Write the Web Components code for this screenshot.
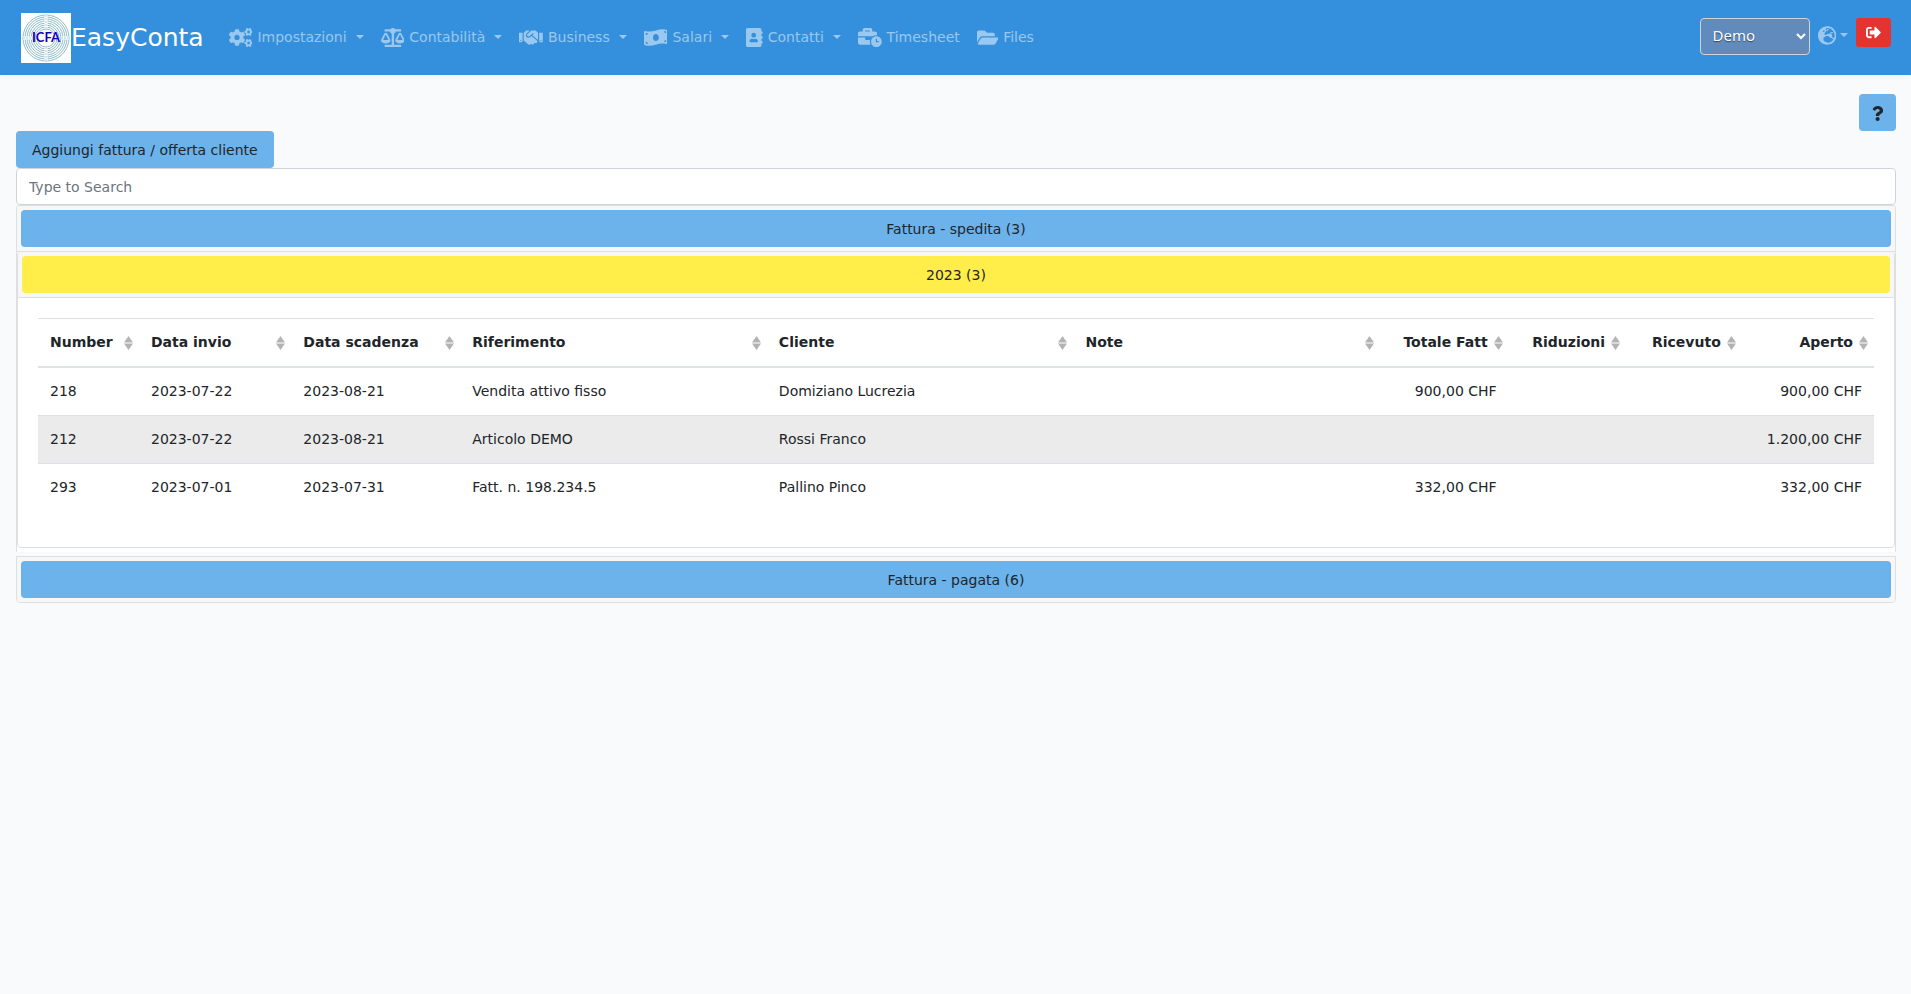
<!DOCTYPE html>
<html lang="it">
<head>
<meta charset="utf-8">
<meta name="viewport" content="width=device-width, initial-scale=1">
<title>EasyConta</title>
<style>
  html { font-family: "DejaVu Sans", sans-serif; font-size: 14px; line-height: 23px; color: #212529; background: #f8fafc; }
  body { margin: 0; }
</style>
</head>
<body>
<easy-app></easy-app>
<script>
const define = (name, html, setup) => customElements.define(name, class extends HTMLElement {
  connectedCallback() {
    if (this.shadowRoot) return;
    const root = this.attachShadow({ mode: "open" });
    const t = document.createElement("template");
    t.innerHTML = html;
    root.append(t.content.cloneNode(true));
    if (setup) setup(this, root);
  }
});

const ICONS = {
  cogs: [640, "M512.1 191l-8.2 14.3c-3 5.3-9.4 7.5-15.1 5.4-11.8-4.4-22.6-10.7-32.1-18.6-4.6-3.8-5.8-10.5-2.8-15.7l8.2-14.3c-6.9-8-12.3-17.3-15.9-27.4h-16.5c-6 0-11.2-4.3-12.2-10.3-2-12-2.1-24.6 0-37.1 1-6 6.2-10.4 12.2-10.4h16.5c3.6-10.1 9-19.4 15.9-27.4l-8.2-14.3c-3-5.2-1.9-11.9 2.8-15.7 9.5-7.9 20.4-14.2 32.1-18.6 5.7-2.1 12.1.1 15.1 5.4l8.2 14.3c10.5-1.9 21.2-1.9 31.7 0L552 6.3c3-5.3 9.4-7.5 15.1-5.4 11.8 4.4 22.6 10.7 32.1 18.6 4.6 3.8 5.8 10.5 2.8 15.7l-8.2 14.3c6.9 8 12.3 17.3 15.9 27.4h16.5c6 0 11.2 4.3 12.2 10.3 2 12 2.1 24.6 0 37.1-1 6-6.2 10.4-12.2 10.4h-16.5c-3.6 10.1-9 19.4-15.9 27.4l8.2 14.3c3 5.2 1.9 11.9-2.8 15.7-9.5 7.9-20.4 14.2-32.1 18.6-5.7 2.1-12.1-.1-15.1-5.4l-8.2-14.3c-10.4 1.9-21.2 1.9-31.7 0zm-10.5-58.8c38.5 29.6 82.4-14.3 52.8-52.8-38.5-29.7-82.4 14.3-52.8 52.8zM386.3 286.1l33.7 16.8c10.1 5.8 14.5 18.1 10.5 29.1-8.9 24.2-26.4 46.4-42.6 65.8-7.4 8.9-20.2 11.1-30.3 5.3l-29.1-16.8c-16 13.7-34.6 24.6-54.9 31.7v33.6c0 11.6-8.3 21.6-19.7 23.6-24.6 4.2-50.4 4.4-75.9 0-11.5-2-20-11.9-20-23.6V418c-20.3-7.2-38.9-18-54.9-31.7L74 403c-10 5.8-22.9 3.6-30.3-5.3-16.2-19.4-33.3-41.6-42.2-65.7-4-10.9.4-23.2 10.5-29.1l33.3-16.8c-3.9-20.9-3.9-42.4 0-63.4L12 205.8c-10.1-5.8-14.6-18.1-10.5-29 8.9-24.2 26-46.4 42.2-65.8 7.4-8.9 20.2-11.1 30.3-5.3l29.1 16.8c16-13.7 34.6-24.6 54.9-31.7V57.1c0-11.5 8.2-21.5 19.6-23.5 24.6-4.2 50.5-4.4 76-.1 11.5 2 20 11.9 20 23.6v33.6c20.3 7.2 38.9 18 54.9 31.7l29.1-16.8c10-5.8 22.9-3.6 30.3 5.3 16.2 19.4 33.2 41.6 42.1 65.8 4 10.9.1 23.2-10 29.1l-33.7 16.8c3.9 21 3.9 42.5 0 63.5zm-117.6 21.1c59.2-77-28.7-164.9-105.7-105.7-59.2 77 28.7 164.9 105.7 105.7zm243.4 182.7l-8.2 14.3c-3 5.3-9.4 7.5-15.1 5.4-11.8-4.4-22.6-10.7-32.1-18.6-4.6-3.8-5.8-10.5-2.8-15.7l8.2-14.3c-6.9-8-12.3-17.3-15.9-27.4h-16.5c-6 0-11.2-4.3-12.2-10.3-2-12-2.1-24.6 0-37.1 1-6 6.2-10.4 12.2-10.4h16.5c3.6-10.1 9-19.4 15.9-27.4l-8.2-14.3c-3-5.2-1.9-11.9 2.8-15.7 9.5-7.9 20.4-14.2 32.1-18.6 5.7-2.1 12.1.1 15.1 5.4l8.2 14.3c10.5-1.9 21.2-1.9 31.7 0l8.2-14.3c3-5.3 9.4-7.5 15.1-5.4 11.8 4.4 22.6 10.7 32.1 18.6 4.6 3.8 5.8 10.5 2.8 15.7l-8.2 14.3c6.9 8 12.3 17.3 15.9 27.4h16.5c6 0 11.2 4.3 12.2 10.3 2 12 2.1 24.6 0 37.1-1 6-6.2 10.4-12.2 10.4h-16.5c-3.6 10.1-9 19.4-15.9 27.4l8.2 14.3c3 5.2 1.9 11.9-2.8 15.7-9.5 7.9-20.4 14.2-32.1 18.6-5.7 2.1-12.1-.1-15.1-5.4l-8.2-14.3c-10.4 1.9-21.2 1.9-31.7 0zM501.6 431c38.5 29.6 82.4-14.3 52.8-52.8-38.5-29.6-82.4 14.3-52.8 52.8z"],
  scale: [640, "M256 336h-.02c0-16.18 1.34-8.73-85.05-181.51-17.65-35.29-68.19-35.36-85.87 0C-2.06 328.75.02 320.33.02 336H0c0 44.18 57.31 80 128 80s128-35.82 128-80zM128 176l72 144H56l72-144zm511.98 160c0-16.18 1.34-8.73-85.05-181.51-17.65-35.29-68.19-35.36-85.87 0-87.12 174.26-85.04 165.84-85.04 181.51H384c0 44.18 57.31 80 128 80s128-35.82 128-80h-.02zM440 320l72-144 72 144H440zm88 128H352V153.25c23.51-10.29 41.16-31.48 46.39-57.25H528c8.84 0 16-7.16 16-16V48c0-8.84-7.16-16-16-16H383.64C369.04 12.68 346.09 0 320 0s-49.04 12.68-63.64 32H112c-8.84 0-16 7.16-16 16v32c0 8.84 7.16 16 16 16h129.61c5.23 25.76 22.87 46.96 46.39 57.25V448H112c-8.84 0-16 7.16-16 16v32c0 8.84 7.16 16 16 16h416c8.84 0 16-7.16 16-16v-32c0-8.84-7.16-16-16-16z"],
  handshake: [640, "M434.7 64h-85.9c-8 0-15.7 3-21.6 8.4l-98.3 90c-.1.1-.2.3-.3.4-16.6 15.6-16.3 40.5-2.1 56 12.7 13.9 39.4 17.6 56.1 2.7.1-.1.3-.1.4-.2l79.9-73.2c6.5-5.9 16.7-5.5 22.6 1 6 6.5 5.5 16.6-1 22.6l-26.1 23.9L504 313.8c2.9 2.4 5.5 5 7.9 7.7V128l-54.6-54.6c-5.9-6-14.1-9.4-22.6-9.4zM544 128.2v223.9c0 17.7 14.3 32 32 32h64V128.2h-96zm48 223.9c-8.8 0-16-7.2-16-16s7.2-16 16-16 16 7.2 16 16-7.2 16-16 16zM0 384h64c17.7 0 32-14.3 32-32V128.2H0V384zm48-63.9c8.8 0 16 7.2 16 16s-7.2 16-16 16-16-7.2-16-16c0-8.9 7.2-16 16-16zm435.9 18.6L334.6 217.5l-30 27.5c-29.7 27.1-75.2 24.5-101.7-4.4-26.9-29.4-24.8-74.9 4.4-101.7L289.1 64h-83.8c-8.5 0-16.6 3.4-22.6 9.4L128 128v223.9h18.3l90.5 81.9c27.4 22.3 67.7 18.1 90-9.3l.2-.2 17.9 15.5c15.9 13 39.4 10.5 52.3-5.4l31.4-38.6 5.4 4.4c13.7 11.1 33.9 9.1 45-4.7l9.5-11.7c11.2-13.8 9.1-33.9-4.6-45.1z"],
  money: [640, "M621.16 54.46C582.37 38.19 543.55 32 504.75 32c-123.17-.01-246.33 62.34-369.5 62.34-30.89 0-61.76-3.92-92.65-13.72-3.47-1.1-6.95-1.62-10.35-1.62C15.04 79 0 92.32 0 110.81v317.26c0 12.63 7.23 24.6 18.84 29.46C57.63 473.81 96.45 480 135.25 480c123.17 0 246.34-62.35 369.51-62.35 30.89 0 61.76 3.92 92.65 13.72 3.47 1.1 6.95 1.62 10.35 1.62 17.21 0 32.25-13.32 32.25-31.81V83.93c-.01-12.64-7.24-24.6-18.85-29.47zM48 132.22c20.12 5.04 41.12 7.57 62.72 8.93C104.84 170.54 79 192.69 48 192.69v-60.47zm0 285v-47.78c34.37 0 62.18 27.27 63.71 61.4-22.53-1.81-43.59-6.31-63.71-13.62zM320 352c-44.19 0-80-42.99-80-96 0-53.02 35.82-96 80-96s80 42.98 80 96c0 53.03-35.83 96-80 96zm272 27.78c-17.52-4.39-35.71-6.85-54.32-8.44 5.87-26.08 27.5-45.88 54.32-49.28v57.72zm0-236.11c-30.89-3.91-54.86-29.7-55.81-61.55 19.54 2.17 38.09 6.23 55.81 12.66v48.89z"],
  contacts: [448, "M436 160c6.6 0 12-5.4 12-12v-40c0-6.6-5.4-12-12-12h-20V48c0-26.5-21.5-48-48-48H48C21.5 0 0 21.5 0 48v416c0 26.5 21.5 48 48 48h320c26.5 0 48-21.5 48-48v-48h20c6.6 0 12-5.4 12-12v-40c0-6.6-5.4-12-12-12h-20v-64h20c6.6 0 12-5.4 12-12v-40c0-6.6-5.4-12-12-12h-20v-64h20zm-228-32c35.3 0 64 28.7 64 64s-28.7 64-64 64-64-28.7-64-64 28.7-64 64-64zm112 236.8c0 10.6-10 19.2-22.4 19.2H118.4C106 384 96 375.4 96 364.8v-19.2c0-31.8 30.1-57.6 67.2-57.6h5c12.3 5.1 25.7 8 39.8 8s27.6-2.9 39.8-8h5c37.1 0 67.2 25.8 67.2 57.6v19.2z"],
  timesheet: [640, "M496 224c-79.59 0-144 64.41-144 144s64.41 144 144 144 144-64.41 144-144-64.41-144-144-144zm64 150.29c0 5.34-4.37 9.71-9.71 9.71h-60.57c-5.34 0-9.71-4.37-9.71-9.71v-76.57c0-5.34 4.37-9.71 9.71-9.71h12.57c5.34 0 9.71 4.37 9.71 9.71V352h38.29c5.34 0 9.71 4.37 9.71 9.71v12.58zM496 192c5.4 0 10.72.33 16 .81V144c0-25.6-22.4-48-48-48h-80V48c0-25.6-22.4-48-48-48H176c-25.6 0-48 22.4-48 48v48H48c-25.6 0-48 22.4-48 48v80h395.12c28.6-20.09 63.35-32 100.88-32zM320 96H192V64h128v32zm6.82 224H208c-8.84 0-16-7.16-16-16v-48H0v144c0 25.6 22.4 48 48 48h291.43C327.1 423.96 320 396.82 320 368c0-16.66 2.48-32.72 6.82-48z"],
  folder: [576, "M572.694 292.093L500.27 416.248A63.997 63.997 0 0 1 444.989 448H45.025c-18.523 0-30.064-20.093-20.731-36.093l72.424-124.155A64 64 0 0 1 152 256h399.964c18.523 0 30.064 20.093 20.73 36.093zM152 224h328v-48c0-26.51-21.49-48-48-48H272l-64-64H48C21.49 64 0 85.49 0 112v278.046l69.077-118.418C86.214 242.25 117.989 224 152 224z"],
  logout: [512, "M497 273L329 441c-15 15-41 4.5-41-17v-96H152c-13.3 0-24-10.7-24-24v-96c0-13.3 10.7-24 24-24h136V88c0-21.4 25.9-32 41-17l168 168c9.3 9.4 9.3 24.6 0 34zM192 436v-40c0-6.6-5.4-12-12-12H96c-17.7 0-32-14.3-32-32V160c0-17.7 14.3-32 32-32h84c6.6 0 12-5.4 12-12V76c0-6.6-5.4-12-12-12H96c-53 0-96 43-96 96v192c0 53 43 96 96 96h84c6.6 0 12-5.4 12-12z"],
  question: [384, "M202.021 0C122.202 0 70.503 32.703 29.914 91.026c-7.363 10.58-5.093 25.086 5.178 32.874l43.138 32.709c10.373 7.865 25.132 6.026 33.253-4.148 25.049-31.381 43.63-49.449 82.757-49.449 30.764 0 68.816 19.799 68.816 49.631 0 22.552-18.617 34.134-48.993 51.164-35.423 19.86-82.299 44.576-82.299 106.405V320c0 13.255 10.745 24 24 24h72.471c13.255 0 24-10.745 24-24v-5.773c0-42.86 125.268-44.645 125.268-160.627C377.504 66.256 286.902 0 202.021 0zM192 373.459c-38.196 0-69.271 31.075-69.271 69.271 0 38.195 31.075 69.27 69.271 69.27s69.271-31.075 69.271-69.271-31.075-69.27-69.271-69.27z"],
  globe: [496, "M248 8C111 8 0 119 0 256s111 248 248 248 248-111 248-248S385 8 248 8zm200 248c0 22.5-3.9 44.2-10.8 64.4h-20.3c-4.3 0-8.4-1.7-11.4-4.8l-32-32.6c-4.5-4.6-4.5-12.1.1-16.7l12.5-12.5v-8.7c0-3-1.2-5.9-3.3-8l-9.4-9.4c-2.1-2.1-5-3.3-8-3.3h-16c-6.2 0-11.3-5.1-11.3-11.3 0-3 1.2-5.9 3.3-8l9.4-9.4c2.1-2.1 5-3.3 8-3.3h32c6.2 0 11.3-5.1 11.3-11.3v-9.4c0-6.2-5.1-11.3-11.3-11.3h-36.7c-8.8 0-16 7.2-16 16v4.5c0 6.9-4.4 13-10.9 15.2l-31.6 10.5c-3.3 1.1-5.5 4.1-5.5 7.6v2.3c0 4.4-3.6 8-8 8h-16c-4.4 0-8-3.6-8-8s-3.6-8-8-8H247c-3 0-5.8 1.7-7.2 4.4l-9.4 18.7c-2.7 5.4-8.2 8.8-14.3 8.8H194c-8.8 0-16-7.2-16-16V199c0-4.2 1.7-8.3 4.7-11.3l20.1-20.1c4.6-4.6 7.2-10.9 7.2-17.5 0-3.4 2.2-6.5 5.5-7.6l40-13.3c1.7-.6 3.2-1.5 4.4-2.7l26.8-26.8c2.1-2.1 3.3-5 3.3-8 0-6.2-5.1-11.3-11.3-11.3H258l-16 16v8c0 4.4-3.6 8-8 8h-16c-4.4 0-8-3.6-8-8v-20c0-2.5 1.2-4.9 3.2-6.4l28.9-21.7c1.9-.1 3.8-.3 5.7-.3C358.3 56 448 145.7 448 256zM130.1 149.1c0-3 1.2-5.9 3.3-8l25.4-25.4c2.1-2.1 5-3.3 8-3.3 6.2 0 11.3 5.1 11.3 11.3v16c0 3-1.2 5.9-3.3 8l-9.4 9.4c-2.1 2.1-5 3.3-8 3.3h-16c-6.2 0-11.3-5.1-11.3-11.3zm128 306.4v-7.1c0-8.8-7.2-16-16-16h-20.2c-10.8 0-26.7-5.3-35.4-11.8l-22.2-16.7c-11.5-8.6-18.2-22.1-18.2-36.4v-23.9c0-16 8.4-30.8 22.1-39l42.9-25.7c7.1-4.2 15.2-6.5 23.4-6.5h31.2c10.9 0 21.4 3.9 29.6 10.9l43.2 37.1h18.3c8.5 0 16.6 3.4 22.6 9.4l17.3 17.3c3.4 3.4 8.1 5.3 12.9 5.3H423c-32.4 58.9-93.8 99.5-164.9 103.1z"]
};

define("easy-icon", `
  <style>
    :host { display: inline-flex; flex: none; }
    svg { display: block; height: var(--icon-size, 19px); fill: currentColor; }
  </style>
  <svg aria-hidden="true"><path fill-rule="evenodd"></path></svg>`,
  (el, root) => {
    const [w, d] = ICONS[el.getAttribute("name")];
    root.querySelector("svg").setAttribute("viewBox", `0 0 ${w} 512`);
    root.querySelector("path").setAttribute("d", d);
  });

define("nav-link", `
  <style>
    :host { display: block; }
    a { display: flex; align-items: center; gap: 5px; padding: 8px; color: rgba(255,255,255,.5); text-decoration: none; white-space: nowrap; }
    :host([menu]) a::after { content: ""; margin: 0 0 2px 4px; border: 4px solid transparent; border-top-color: currentColor; border-bottom: 0; }
    :host([compact]) a { gap: 0; padding: 8px 0; }
  </style>
  <a href="#"><slot></slot></a>`,
  (el, root) => {
    const link = root.querySelector("a");
    const icon = document.createElement("easy-icon");
    icon.setAttribute("name", el.getAttribute("icon"));
    link.prepend(icon);
    const label = el.getAttribute("label");
    if (label) link.setAttribute("aria-label", label);
  });

define("easy-logo", `
  <style>
    :host { display: block; width: 50px; height: 50px; background: #fff; }
    svg { display: block; }
    text { font: bold 13px Lato, sans-serif; fill: #1800b4; }
  </style>
  <svg width="50" height="50" viewBox="0 0 50 50" role="img" aria-label="ICFA">
    <g class="rings" fill="none" stroke="#8fbcc4"></g>
    <path d="M25 2v13M25 34v14M2 25h9M40 25h8" stroke="#fff" stroke-width="3"/>
    <path d="M25 2v13M25 34v14M2 25h9M40 25h8" stroke="#a9ccd2" stroke-dasharray="2 1"/>
    <text x="25" y="29" text-anchor="middle">ICFA</text>
  </svg>`,
  (el, root) => {
    const g = root.querySelector(".rings");
    for (let r = 9; r <= 23; r += 2) {
      const c = document.createElementNS("http://www.w3.org/2000/svg", "circle");
      c.setAttribute("cx", 25); c.setAttribute("cy", 25); c.setAttribute("r", r);
      g.append(c);
    }
  });

define("easy-navbar", `
  <style>
    :host { display: flex; align-items: center; min-height: 75px; box-sizing: border-box; padding: 0 20px 0 21px; background: #3490dc; box-shadow: 0 2px 4px rgba(0,0,0,.04); }
    .brand { display: flex; align-items: center; margin-right: 16px; color: #fff; font-size: 25px; text-decoration: none; }
    nav { display: flex; flex-wrap: wrap; flex: 1; gap: 1px; padding-left: 1px; }
    .tools { display: flex; align-items: flex-start; gap: 8px; padding-bottom: 2px; }
    select { width: 110px; height: 37px; padding: 4px 8px 8px; border: 1px solid #ced4da; border-radius: 4px; background: #628bbd; color: #fff; font: 15px "Noto Sans", sans-serif; text-shadow: 0 1px 1px rgba(0,0,0,.5); }
    .logout { display: flex; padding: 7px 10px; border: 0; border-radius: 3px; background: #e3342f; color: #fff; --icon-size: 15px; }
  </style>
  <a class="brand" href="#"><easy-logo></easy-logo><span>EasyConta</span></a>
  <nav aria-label="Menu"><slot></slot></nav>
  <div class="tools">
    <select aria-label="Azienda"><option>Demo</option></select>
    <nav-link icon="globe" label="Lingua" menu compact></nav-link>
    <button class="logout" aria-label="Esci"><easy-icon name="logout"></easy-icon></button>
  </div>`);

define("easy-button", `
  <style>
    :host { display: block; }
    button { display: flex; justify-content: center; align-items: center; width: 100%; min-height: 37px; box-sizing: border-box; padding: 7px 13px 6px; border: 0; border-radius: 4px; background: var(--button-color, #6cb2eb); color: inherit; font: inherit; line-height: 24px; --icon-size: 15px; }
    :host([wide]) button { padding-inline: 16px; }
  </style>
  <button><slot></slot></button>`,
  (el, root) => {
    const label = el.getAttribute("label");
    if (label) root.querySelector("button").setAttribute("aria-label", label);
  });

define("search-box", `
  <style>
    :host { display: block; }
    input { display: block; width: 100%; height: 37px; box-sizing: border-box; padding: 6px 12px; border: 1px solid #ced4da; border-radius: 4px; background: #fff; color: #495057; font: inherit; }
    input::placeholder { color: #6c757d; opacity: 1; }
  </style>
  <input type="search" placeholder="Type to Search" aria-label="Type to Search">`);

define("invoice-group", `
  <style>
    :host { display: block; border: 1px solid #dfdfdf; border-radius: 0 0 4px 4px; overflow: hidden; background: #fff; }
    :host([open]) { border-bottom: 0; border-radius: 4px 4px 0 0; }
    :host([year]) { --button-color: #ffed4a; margin-top: -1px; border-bottom: 1px solid #dfdfdf; border-radius: 4px; }
    header { padding: 4px; background: #f7f7f7; }
    :host([open]) header { border-bottom: 1px solid #dfdfdf; }
    .body { display: none; }
    :host([open]) .body { display: block; }
  </style>
  <header><easy-button></easy-button></header>
  <div class="body"><slot></slot></div>`,
  (el, root) => { root.querySelector("easy-button").textContent = el.getAttribute("heading"); });

/* heading, share of the table's width, right-aligned */
const COLUMNS = [
  ["Number", 55], ["Data invio", 83], ["Data scadenza", 92], ["Riferimento", 167], ["Cliente", 167],
  ["Note", 167], ["Totale Fatt", 70, 1], ["Riduzioni", 64, 1], ["Ricevuto", 63, 1], ["Aperto", 72, 1]
];
const ROWS = [
  ["218", "2023-07-22", "2023-08-21", "Vendita attivo fisso", "Domiziano Lucrezia", "", "900,00 CHF", "", "", "900,00 CHF"],
  ["212", "2023-07-22", "2023-08-21", "Articolo DEMO", "Rossi Franco", "", "", "", "", "1.200,00 CHF"],
  ["293", "2023-07-01", "2023-07-31", "Fatt. n. 198.234.5", "Pallino Pinco", "", "332,00 CHF", "", "", "332,00 CHF"]
];
define("invoice-table", `
  <style>
    :host { display: block; padding: 20px 20px 36px; overflow-x: auto; }
    table { width: 100%; min-width: 1400px; table-layout: fixed; border-collapse: separate; border-spacing: 0; }
    th, td { padding: 12px; text-align: left; white-space: nowrap; }
    th { padding-right: 6px; border-top: 1px solid #dee2e6; border-bottom: 2px solid #dee2e6; }
    th div { display: flex; align-items: center; justify-content: space-between; gap: 6px; }
    th.num div { justify-content: flex-end; }
    th svg { flex: none; fill: #b3b3b3; }
    td { border-top: 1px solid #dee2e6; }
    tr:first-child td { border-top: 0; }
    td.num { text-align: right; }
    tbody tr:nth-child(even) { background: #ebebeb; }
  </style>
  <table><colgroup></colgroup><thead><tr></tr></thead><tbody></tbody></table>`,
  (el, root) => {
    const total = COLUMNS.reduce((s, c) => s + c[1], 0);
    const num = i => COLUMNS[i][2] ? ' class="num"' : "";
    root.querySelector("colgroup").innerHTML = COLUMNS.map(c => `<col style="width:${c[1] / total * 100}%">`).join("");
    root.querySelector("thead tr").innerHTML = COLUMNS.map((c, i) =>
      `<th scope="col"${num(i)}><div><span>${c[0]}</span><svg width="9" height="14" viewBox="0 0 9 14" aria-hidden="true"><path d="M0 6.5 4.5 0 9 6.5zM0 7.5h9L4.5 14z"/></svg></div></th>`).join("");
    root.querySelector("tbody").innerHTML = ROWS.map(r => `<tr>${r.map((v, i) => `<td${num(i)}>${v}</td>`).join("")}</tr>`).join("");
  });

define("easy-app", `
  <style>
    :host { display: block; }
    main { padding: 19px 15px 16px 16px; }
    .bar { display: flex; }
    .help { margin-left: auto; }
    .groups { display: flex; flex-direction: column; gap: 4px; }
    .inner { padding-bottom: 4px; }
  </style>
  <easy-navbar>
    <nav-link icon="cogs" menu>Impostazioni</nav-link>
    <nav-link icon="scale" menu>Contabilità</nav-link>
    <nav-link icon="handshake" menu>Business</nav-link>
    <nav-link icon="money" menu>Salari</nav-link>
    <nav-link icon="contacts" menu>Contatti</nav-link>
    <nav-link icon="timesheet">Timesheet</nav-link>
    <nav-link icon="folder">Files</nav-link>
  </easy-navbar>
  <main>
    <div class="bar"><easy-button class="help" label="Aiuto"><easy-icon name="question"></easy-icon></easy-button></div>
    <div class="bar"><easy-button wide>Aggiungi fattura / offerta cliente</easy-button></div>
    <search-box></search-box>
    <div class="groups">
      <invoice-group heading="Fattura - spedita (3)" open>
        <div class="inner"><invoice-group heading="2023 (3)" year open><invoice-table></invoice-table></invoice-group></div>
      </invoice-group>
      <invoice-group heading="Fattura - pagata (6)"></invoice-group>
    </div>
  </main>`);
</script>
</body>
</html>
